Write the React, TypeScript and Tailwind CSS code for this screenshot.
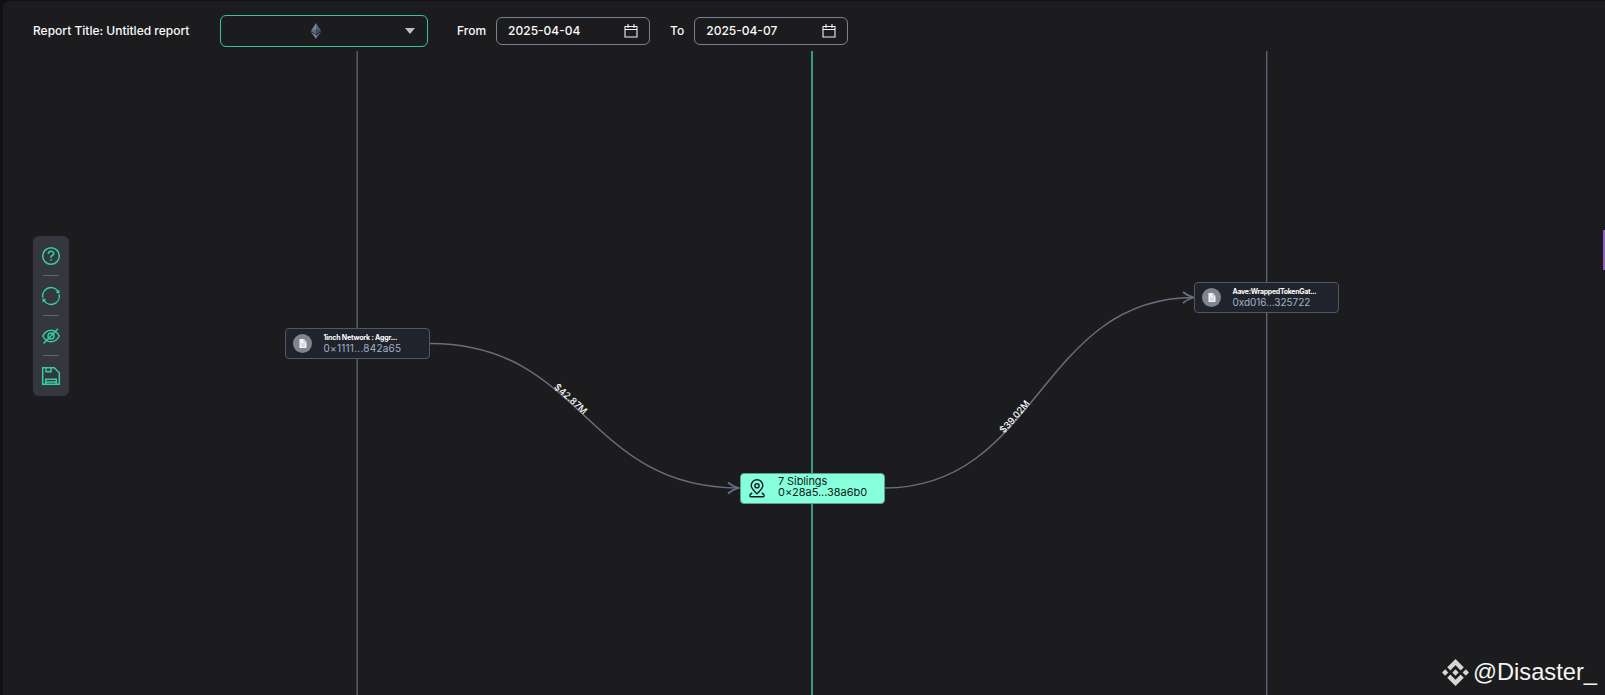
import { ReactNode } from "react";

interface IDateField {
  label: string
  value: string
}

interface INode {
  title: string
  address: string
  position: string
  titleSpacing: string
  addressSpacing: string
}

interface IFlow {
  id: string
  path: string
  amount: string
  offset: string
}

const flows: IFlow[] = [
  { id: "flow-in", path: "M430 343.5 C584.5 343.5 584.5 488 739 488", amount: "$42.87M", offset: "43.9%" },
  { id: "flow-out", path: "M884 488 C1039 488 1039 297.5 1194 297.5", amount: "$39.02M", offset: "41%" },
];

const contracts: INode[] = [
  {
    title: "1inch Network : Aggr...",
    address: "0×1111...842a65",
    position: "left-[282px] top-[277px]",
    titleSpacing: "tracking-[-0.18px]",
    addressSpacing: "tracking-[0.24px]",
  },
  {
    title: "Aave:WrappedTokenGat...",
    address: "0xd016...325722",
    position: "left-[1191px] top-[231px]",
    titleSpacing: "tracking-[-0.3px]",
    addressSpacing: "tracking-[-0.05px]",
  },
];

const CalendarIcon = () => (
  <svg className="h-[14px] w-[14px]" viewBox="0 0 14 14" fill="none" stroke="#f3f4f6" strokeWidth="1.1">
    <path d="M1 2.5h12v10.5H1zM1 5.5h12M4 0v4M10 0v4" />
  </svg>
);

const EthereumIcon = () => (
  <svg className="h-4 w-[10px]" viewBox="0 0 10 16">
    <path d="M5 0L0 8l5 3z" fill="#7c879d" />
    <path d="M5 0l5 8-5 3z" fill="#5b657a" />
    <path d="M0 8l5-2.2V11z" fill="#606a7f" />
    <path d="M10 8L5 5.8V11z" fill="#3f485c" />
    <path d="M0 9l5 3v4z" fill="#7c879d" />
    <path d="M10 9l-5 3v4z" fill="#566075" />
  </svg>
);

const ToolButton = ({ label, children }: { label: string; children: ReactNode }) => (
  <button aria-label={label} className="flex h-[39px] w-full items-center justify-center">
    <svg className="h-5 w-5" viewBox="0 0 20 20" fill="none" stroke="#37cf9d" strokeWidth="1.5">
      {children}
    </svg>
  </button>
);

const Divider = () => <div className="h-px w-4 bg-[#5f6678]" />;

const Toolbar = () => {
  return (
    <div className="absolute left-[30px] top-[185px] flex h-[160px] w-9 flex-col items-center rounded-md bg-[#35373f]">
      <ToolButton label="Help">
        <circle cx="10" cy="10" r="8.3" />
        <path d="M7.4 8V7.4a2.6 2.3 0 1 1 3.8 2.1c-.8.5-1.2.9-1.2 1.8v.5M10 13.2v1.5" />
      </ToolButton>
      <Divider />
      <ToolButton label="Refresh">
        <path d="M1.8 11.5A8.3 8.3 0 0 1 16.7 5.1M18.2 8.5A8.3 8.3 0 0 1 3.3 14.9" />
        <path d="M18.2 4v3.4l-3.2-1zM1.8 16v-3.4l3.2 1z" fill="#37cf9d" strokeWidth="0.4" />
      </ToolButton>
      <Divider />
      <ToolButton label="Hide">
        <path d="M1.7 10C4 5.9 7 4.2 10 4.2s6 1.7 8.3 5.8c-2.3 4.1-5.3 5.8-8.3 5.8S4 14.1 1.7 10z" />
        <circle cx="10" cy="10" r="3" />
        <path d="M2.5 17.5L17 2.8" />
      </ToolButton>
      <Divider />
      <ToolButton label="Save">
        <path d="M1.7 1.7h11.5l5.1 5.1v11.5H1.7zM5 1.7v4.1h5V1.7M4.7 18.3v-5h10.6v5M4.7 15.9h10.6" />
      </ToolButton>
    </div>
  );
}

const DateField = ({ label, value }: IDateField) => {
  return (
    <div className="flex items-center justify-between">
      <span>{label}</span>
      <div className="ml-[10px] flex h-7 w-[154px] items-center justify-between rounded-md border border-[#7b8294] pl-[11px] pr-[11px]">
        <span>{value}</span>
        <CalendarIcon />
      </div>
    </div>
  );
}

const Header = () => {
  return (
    <header className="flex h-[50px] items-start pl-[30px] pt-[14px] text-[12px] font-medium text-gray-50">
      <div className="flex h-8 items-center">
        <span className="w-[187px] whitespace-nowrap">Report Title: Untitled report</span>
        <div className="flex h-8 w-[208px] items-center justify-between rounded-md border border-[#34c796] pl-[90px] pr-3">
          <EthereumIcon />
          <svg className="h-[6px] w-[10px]" viewBox="0 0 10 6"><path d="M0 0h10L5 6z" fill="#bfc1c9" /></svg>
        </div>
        <div className="ml-[29px] flex gap-5">
          <DateField label="From" value="2025-04-04" />
          <DateField label="To" value="2025-04-07" />
        </div>
      </div>
    </header>
  );
}

const ContractNode = ({ title, address, position, titleSpacing, addressSpacing }: INode) => {
  return (
    <div className={`absolute flex h-[31px] w-[145px] items-center rounded-[4px] border border-[#505866] bg-[#20232b] pl-[7px] ${position}`}>
      <div className="flex h-[19px] w-[19px] items-center justify-center rounded-full bg-[#80848f]">
        <svg className="h-[9px] w-[8px]" viewBox="0 0 8 9">
          <path d="M0.5 0H5l2.5 3v6h-7z" fill="#f3f4f6" />
          <path d="M5 0v3h3M2 5h4M2 7h4" fill="none" stroke="#9ca3af" strokeWidth="0.6" />
        </svg>
      </div>
      <div className="ml-[11.5px] whitespace-nowrap">
        <p className={`text-[7px] font-bold leading-[9px] text-white ${titleSpacing}`}>{title}</p>
        <p className={`text-[10px] leading-[13px] text-[#a3b1cc] ${addressSpacing}`}>{address}</p>
      </div>
    </div>
  );
}

const SiblingsNode = () => {
  return (
    <div className="absolute left-[736.5px] top-[421.5px] flex h-[31px] w-[145px] items-center rounded-[4px] border border-[#5e9e91] bg-[#86ffdb] pl-2 text-[#111b22]">
      <svg className="h-[19px] w-4" viewBox="0 0 16 19" fill="none" stroke="currentColor" strokeWidth="1.4">
        <path d="M8 14.8C4.6 11.8 2.2 9.4 2.2 6.6a5.8 5.8 0 0 1 11.6 0C13.8 9.4 11.4 11.8 8 14.8z" />
        <circle cx="8" cy="6.8" r="2.1" />
        <path d="M3.2 14C1.6 14.8.6 15.8.9 17c.2.6.8.8 1.5.8h11.2c.7 0 1.3-.2 1.5-.8.3-1.2-.7-2.2-2.3-3" />
      </svg>
      <div className="mb-[2px] ml-[13.5px] whitespace-nowrap text-[11px] leading-[11px]">
        <p className="tracking-[-0.1px]">7 Siblings</p>
        <p className="tracking-[-0.05px]">0×28a5...38a6b0</p>
      </div>
    </div>
  );
}

const FlowLines = () => {
  return (
    <svg className="block h-full w-full" viewBox="3 51 1602 644">
      <path d="M357.2 51V695M1266.7 51V695" stroke="#5b6272" strokeWidth="1.4" />
      <path d="M812 51V695" stroke="#369c7d" strokeWidth="2" />
      <g fill="none" stroke="#677080" strokeWidth="1.5">
        {flows.map((flow) => (
          <path key={flow.id} id={flow.id} d={flow.path} />
        ))}
        <path d="M728 482.5q4 3.5 10.5 5.5-6.500 2-10.500 5.500M1183 292q4 3.500 10.500 5.500-6.500 2-10.500 5.500" strokeWidth="1.8" />
      </g>
      {flows.map((flow) => (
        <text key={flow.id} fill="#f9fafb" className="text-[9.3px] font-medium" textAnchor="middle">
          <textPath href={`#${flow.id}`} startOffset={flow.offset}>{flow.amount}</textPath>
        </text>
      ))}
    </svg>
  );
}

const Watermark = () => {
  return (
    <div className="absolute bottom-[7px] right-2 flex items-center gap-1 text-[#f4f4f4]">
      <svg className="h-[27px] w-[27px]" viewBox="0 0 28 28" fill="#d6d6d6">
        <path d="M14 0l8.6 8.6-3.3 3.2L14 6.5l-5.3 5.3-3.3-3.2zM14 28l-8.6-8.6 3.3-3.2 5.3 5.3 5.3-5.3 3.3 3.2z" />
        <path d="M3.3 10.7L6.6 14l-3.3 3.3L0 14zM14 10.7l3.3 3.3-3.3 3.3-3.3-3.3zM24.7 10.7L28 14l-3.3 3.3-3.3-3.3z" />
      </svg>
      <span className="font-['Liberation_Sans',sans-serif] text-[23.7px] leading-8">@Disaster_</span>
    </div>
  );
}

const App = () => {
  return (
    <div className="h-screen overflow-hidden bg-[#101116] pl-[3px] pt-px font-['Inter',sans-serif]">
      <div className="flex h-full flex-col rounded-tl-md bg-[#1c1c1e]">
        <Header />
        <main className="relative min-h-0 flex-1">
          <FlowLines />
          {contracts.map((node) => (
            <ContractNode key={node.address} {...node} />
          ))}
          <SiblingsNode />
          <Toolbar />
          <div className="absolute right-0 top-[179px] h-10 w-[2px] bg-[#925fc0]" />
          <Watermark />
        </main>
      </div>
    </div>
  );
}

export default App;
